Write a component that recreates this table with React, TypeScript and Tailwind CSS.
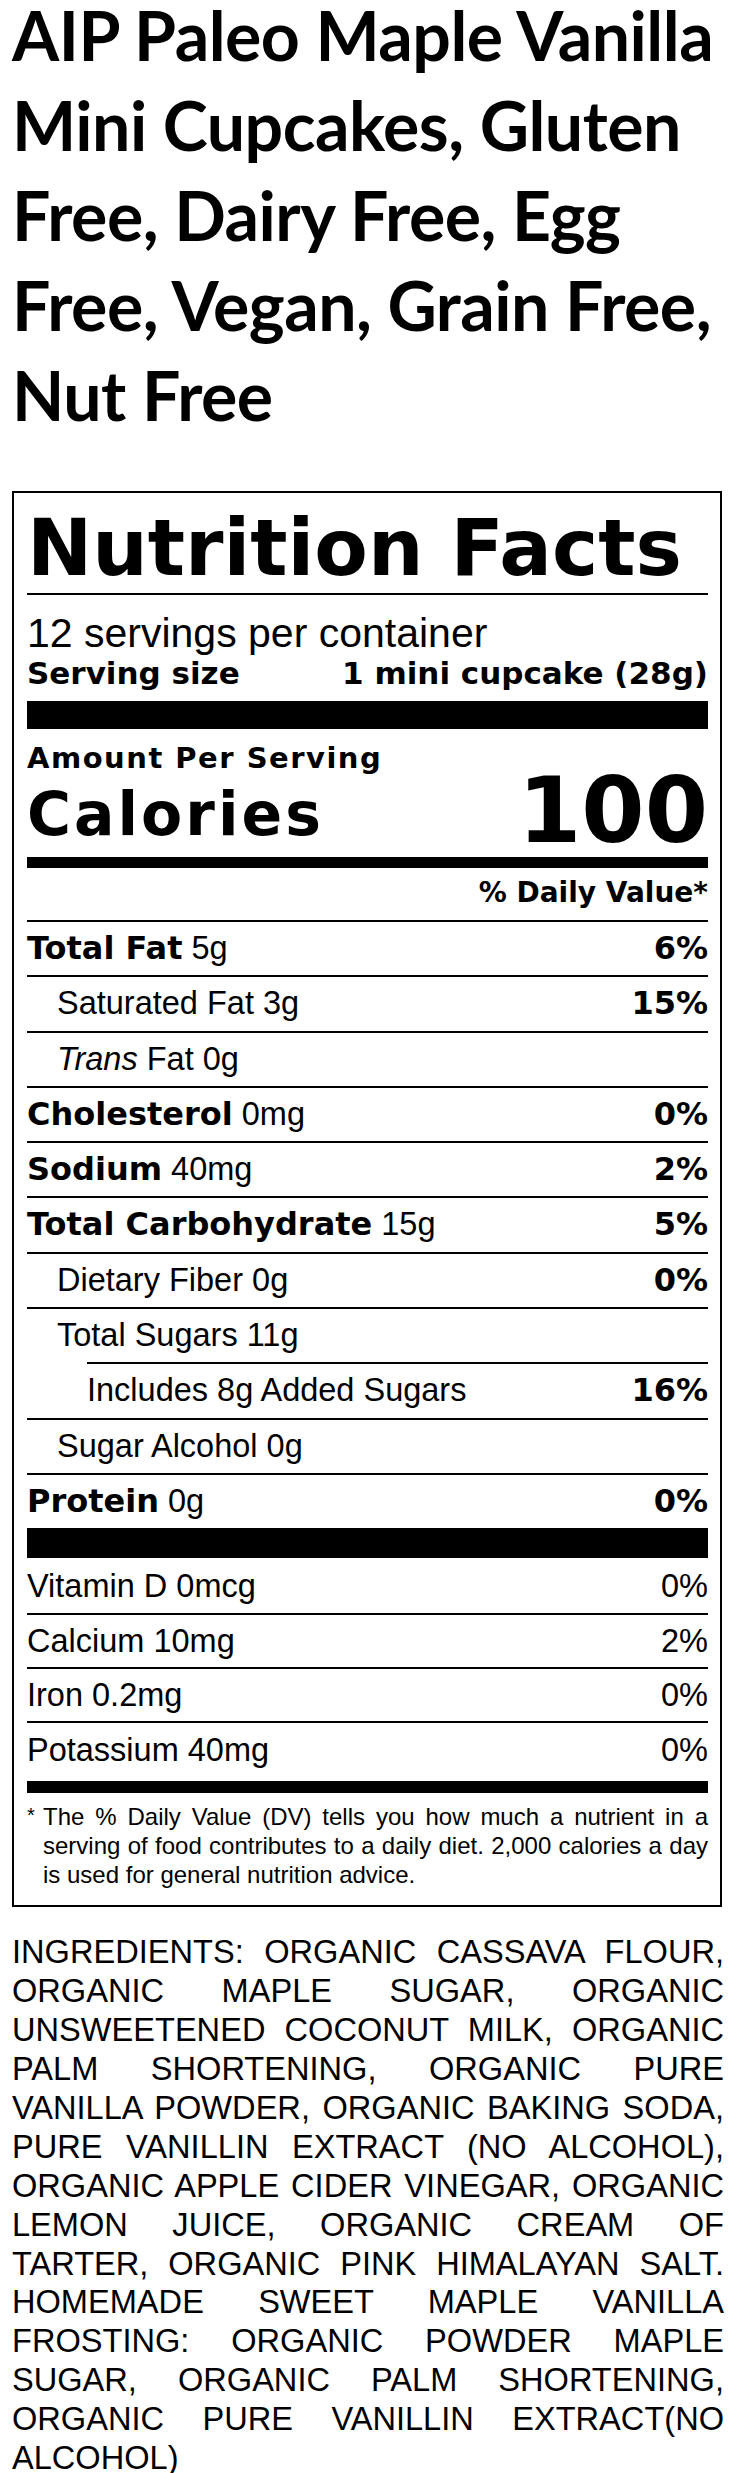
const heavy = "font-['DejaVu_Sans',sans-serif] font-bold";
const reg = "font-['Liberation_Sans',Arial,sans-serif]";

type Nutrient = {
  label: string;
  amount?: string;
  dv?: string;
  bold?: boolean;
  indent?: "sub" | "added";
  italic?: string;
};

const nutrients: Nutrient[] = [
  { label: "Total Fat", amount: "5g", dv: "6%", bold: true },
  { label: "Saturated Fat", amount: "3g", dv: "15%", indent: "sub" },
  { label: "Fat", italic: "Trans", amount: "0g", indent: "sub" },
  { label: "Cholesterol", amount: "0mg", dv: "0%", bold: true },
  { label: "Sodium", amount: "40mg", dv: "2%", bold: true },
  { label: "Total Carbohydrate", amount: "15g", dv: "5%", bold: true },
  { label: "Dietary Fiber", amount: "0g", dv: "0%", indent: "sub" },
  { label: "Total Sugars", amount: "11g", indent: "sub" },
  { label: "Includes 8g Added Sugars", dv: "16%", indent: "added" },
  { label: "Sugar Alcohol", amount: "0g", indent: "sub" },
  { label: "Protein", amount: "0g", dv: "0%", bold: true },
];

function NutrientRow({ n }: { n: Nutrient }) {
  return (
    <div
      className={
        n.indent === "added"
          ? "ml-[60px] flex h-[55.3px] justify-between border-t-2 border-black leading-[53.3px]"
          : "flex h-[55.3px] justify-between border-t-2 border-black leading-[53.3px]"
      }
    >
      <div className={n.indent === "sub" ? "whitespace-nowrap pl-[30px]" : "whitespace-nowrap"}>
        {n.italic && <span className="italic">{n.italic} </span>}
        {n.bold ? <span className={`${heavy} text-[32px]`}>{n.label}</span> : n.label}
        {n.amount && ` ${n.amount}`}
      </div>
      {n.dv && <div className={`${heavy} text-[32px]`}>{n.dv}</div>}
    </div>
  );
}

export default function App() {
  return (
    <div className={`min-h-screen bg-white px-3 text-black ${reg}`}>
      <h1 className="pt-px font-['Lato',sans-serif] text-[68px] font-bold leading-[90px] tracking-[-0.5px]">
        <span className="relative -top-[11px]">
          AIP Paleo Maple Vanilla Mini Cupcakes, Gluten Free, Dairy Free, Egg Free, Vegan, Grain
          Free, Nut Free
        </span>
      </h1>

      <div className="mt-[40px] w-[710px] border-2 border-black pl-[13px] pr-[12px]">
        <div className={`${heavy} pt-[10px] text-[78px] leading-[90px] whitespace-nowrap`}>
          Nutrition Facts
        </div>
        <div className="h-[2px] bg-black" />

        <div className="pt-[16px] text-[41px] leading-[44px]">12 servings per container</div>
        <div className={`${heavy} flex justify-between pb-[10px] text-[31px] leading-[36px]`}>
          <span>Serving size</span>
          <span>1 mini cupcake (28g)</span>
        </div>
        <div className="h-[28px] bg-black" />

        <div className={`${heavy} pt-[12px] text-[29px] leading-[34px] tracking-[1.5px]`}>
          Amount Per Serving
        </div>
        <div className={`${heavy} flex h-[82px] items-start justify-between`}>
          <span className="mt-[4px] text-[60px] leading-[70px] tracking-[3px]">Calories</span>
          <span className="mt-[-9px] text-[91px] leading-[90px]">100</span>
        </div>
        <div className="h-[11px] bg-black" />

        <div className={`${heavy} pt-[8px] pb-[10px] text-right text-[28px] leading-[34px]`}>
          % Daily Value*
        </div>

        <div className="text-[32.5px]">
          {nutrients.map((n) => (
            <NutrientRow key={n.label} n={n} />
          ))}
        </div>
        <div className="h-[30px] bg-black" />

        <div className="text-[32.5px]">
          <div className="flex h-[55px] justify-between pt-[2px] leading-[53px]">
            <span>Vitamin D 0mcg</span>
            <span>0%</span>
          </div>
          <div className="flex h-[54px] justify-between border-t-2 border-black leading-[52px]">
            <span>Calcium 10mg</span>
            <span>2%</span>
          </div>
          <div className="flex h-[54px] justify-between border-t-2 border-black leading-[52px]">
            <span>Iron 0.2mg</span>
            <span>0%</span>
          </div>
          <div className="flex h-[60px] justify-between border-t-2 border-black pt-[1px] leading-[52px]">
            <span>Potassium 40mg</span>
            <span>0%</span>
          </div>
        </div>
        <div className="h-[12px] bg-black" />

        <div className="flex pt-[9px] pb-[16px]">
          <div className="w-[16px] shrink-0 text-[20px] leading-[26px]">*</div>
          <p className="text-justify text-[24px] leading-[29px]">
            The % Daily Value (DV) tells you how much a nutrient in a serving of food contributes
            to a daily diet. 2,000 calories a day is used for general nutrition advice.
          </p>
        </div>
      </div>

      <p className="mt-[26px] text-justify text-[32.6px] leading-[38.9px]">
        INGREDIENTS: ORGANIC CASSAVA FLOUR, ORGANIC MAPLE SUGAR, ORGANIC UNSWEETENED COCONUT MILK,
        ORGANIC PALM SHORTENING, ORGANIC PURE VANILLA POWDER, ORGANIC BAKING SODA, PURE VANILLIN
        EXTRACT (NO ALCOHOL), ORGANIC APPLE CIDER VINEGAR, ORGANIC LEMON JUICE, ORGANIC CREAM OF
        TARTER, ORGANIC PINK HIMALAYAN SALT. HOMEMADE SWEET MAPLE VANILLA FROSTING: ORGANIC POWDER
        MAPLE SUGAR, ORGANIC PALM SHORTENING, ORGANIC PURE VANILLIN EXTRACT(NO ALCOHOL)
      </p>
    </div>
  );
}
